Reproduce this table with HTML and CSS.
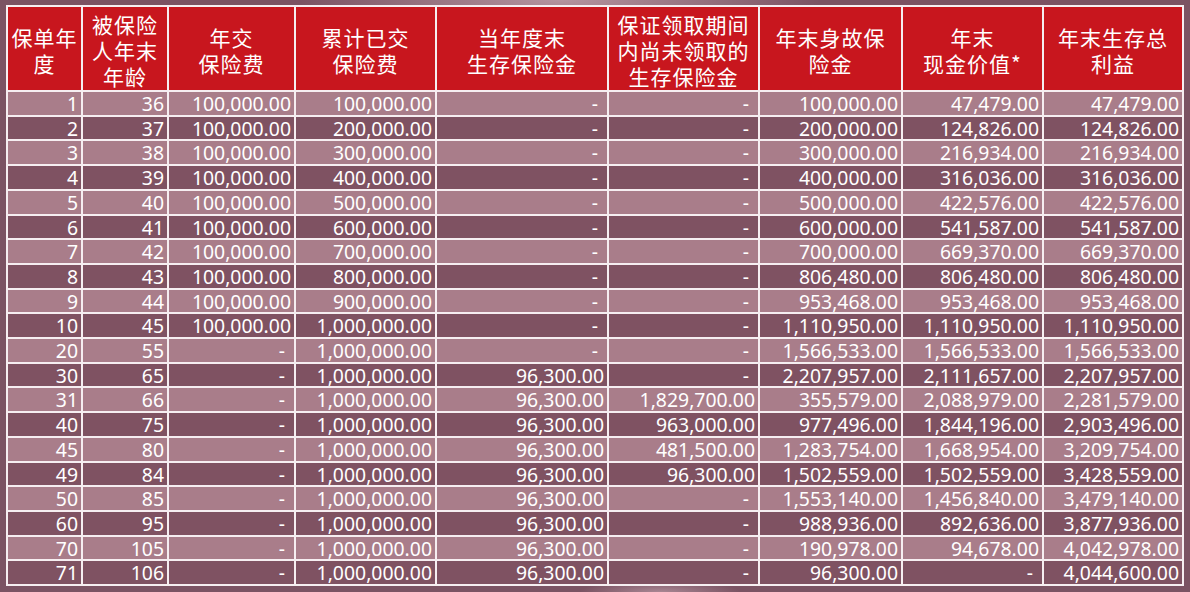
FILE: index.html
```html
<!DOCTYPE html>
<html lang="zh-CN">
<head>
<meta charset="utf-8">
<title>利益演示表</title>
<link rel="stylesheet" href="styles.css">
</head>
<body>
<table class="benefit">
<colgroup>
<col class="w1"><col class="w2"><col class="w3"><col class="w4"><col class="w5"><col class="w6"><col class="w7"><col class="w8"><col class="w9">
</colgroup>
<thead>
<tr class="head">
<th>保单年<br>度</th>
<th>被保险<br>人年末<br>年龄</th>
<th>年交<br>保险费</th>
<th>累计已交<br>保险费</th>
<th>当年度末<br>生存保险金</th>
<th>保证领取期间<br>内尚未领取的<br>生存保险金</th>
<th>年末身故保<br>险金</th>
<th>年末<br>现金价值*</th>
<th>年末生存总<br>利益</th>
</tr>
</thead>
<tbody>
<tr class="lt"><td>1</td><td>36</td><td>100,000.00</td><td>100,000.00</td><td class="nil">-</td><td class="nil">-</td><td>100,000.00</td><td>47,479.00</td><td>47,479.00</td></tr>
<tr class="dk"><td>2</td><td>37</td><td>100,000.00</td><td>200,000.00</td><td class="nil">-</td><td class="nil">-</td><td>200,000.00</td><td>124,826.00</td><td>124,826.00</td></tr>
<tr class="lt"><td>3</td><td>38</td><td>100,000.00</td><td>300,000.00</td><td class="nil">-</td><td class="nil">-</td><td>300,000.00</td><td>216,934.00</td><td>216,934.00</td></tr>
<tr class="dk"><td>4</td><td>39</td><td>100,000.00</td><td>400,000.00</td><td class="nil">-</td><td class="nil">-</td><td>400,000.00</td><td>316,036.00</td><td>316,036.00</td></tr>
<tr class="lt"><td>5</td><td>40</td><td>100,000.00</td><td>500,000.00</td><td class="nil">-</td><td class="nil">-</td><td>500,000.00</td><td>422,576.00</td><td>422,576.00</td></tr>
<tr class="dk"><td>6</td><td>41</td><td>100,000.00</td><td>600,000.00</td><td class="nil">-</td><td class="nil">-</td><td>600,000.00</td><td>541,587.00</td><td>541,587.00</td></tr>
<tr class="lt"><td>7</td><td>42</td><td>100,000.00</td><td>700,000.00</td><td class="nil">-</td><td class="nil">-</td><td>700,000.00</td><td>669,370.00</td><td>669,370.00</td></tr>
<tr class="dk"><td>8</td><td>43</td><td>100,000.00</td><td>800,000.00</td><td class="nil">-</td><td class="nil">-</td><td>806,480.00</td><td>806,480.00</td><td>806,480.00</td></tr>
<tr class="lt"><td>9</td><td>44</td><td>100,000.00</td><td>900,000.00</td><td class="nil">-</td><td class="nil">-</td><td>953,468.00</td><td>953,468.00</td><td>953,468.00</td></tr>
<tr class="dk"><td>10</td><td>45</td><td>100,000.00</td><td>1,000,000.00</td><td class="nil">-</td><td class="nil">-</td><td>1,110,950.00</td><td>1,110,950.00</td><td>1,110,950.00</td></tr>
<tr class="lt"><td>20</td><td>55</td><td class="nil">-</td><td>1,000,000.00</td><td class="nil">-</td><td class="nil">-</td><td>1,566,533.00</td><td>1,566,533.00</td><td>1,566,533.00</td></tr>
<tr class="dk"><td>30</td><td>65</td><td class="nil">-</td><td>1,000,000.00</td><td>96,300.00</td><td class="nil">-</td><td>2,207,957.00</td><td>2,111,657.00</td><td>2,207,957.00</td></tr>
<tr class="lt"><td>31</td><td>66</td><td class="nil">-</td><td>1,000,000.00</td><td>96,300.00</td><td>1,829,700.00</td><td>355,579.00</td><td>2,088,979.00</td><td>2,281,579.00</td></tr>
<tr class="dk"><td>40</td><td>75</td><td class="nil">-</td><td>1,000,000.00</td><td>96,300.00</td><td>963,000.00</td><td>977,496.00</td><td>1,844,196.00</td><td>2,903,496.00</td></tr>
<tr class="lt"><td>45</td><td>80</td><td class="nil">-</td><td>1,000,000.00</td><td>96,300.00</td><td>481,500.00</td><td>1,283,754.00</td><td>1,668,954.00</td><td>3,209,754.00</td></tr>
<tr class="dk"><td>49</td><td>84</td><td class="nil">-</td><td>1,000,000.00</td><td>96,300.00</td><td>96,300.00</td><td>1,502,559.00</td><td>1,502,559.00</td><td>3,428,559.00</td></tr>
<tr class="lt"><td>50</td><td>85</td><td class="nil">-</td><td>1,000,000.00</td><td>96,300.00</td><td class="nil">-</td><td>1,553,140.00</td><td>1,456,840.00</td><td>3,479,140.00</td></tr>
<tr class="dk"><td>60</td><td>95</td><td class="nil">-</td><td>1,000,000.00</td><td>96,300.00</td><td class="nil">-</td><td>988,936.00</td><td>892,636.00</td><td>3,877,936.00</td></tr>
<tr class="lt"><td>70</td><td>105</td><td class="nil">-</td><td>1,000,000.00</td><td>96,300.00</td><td class="nil">-</td><td>190,978.00</td><td>94,678.00</td><td>4,042,978.00</td></tr>
<tr class="dk"><td>71</td><td>106</td><td class="nil">-</td><td>1,000,000.00</td><td>96,300.00</td><td class="nil">-</td><td>96,300.00</td><td class="nil">-</td><td>4,044,600.00</td></tr>
</tbody>
</table>
</body>
</html>
```

FILE: styles.css
```css
html, body {
  margin: 0;
  padding: 0;
}
body {
  width: 1190px;
  height: 592px;
  overflow: hidden;
  background-color: #7b5363;
  background-image:
    radial-gradient(ellipse 260px 40px at 560px 0px, rgba(200, 170, 180, 0.75), rgba(200, 170, 180, 0) 100%),
    radial-gradient(ellipse 80px 12px at 660px 592px, rgba(200, 170, 180, 0.6), rgba(200, 170, 180, 0) 100%);
  font-family: "Noto Sans", "Noto Sans CJK SC", sans-serif;
  color: #ffffff;
}
.benefit {
  margin: 5px 0 0 6px;
  border-collapse: collapse;
  table-layout: fixed;
  width: 1178px;
  border: 2px solid #f6eef1;
}
.w1 { width: 75px; }
.w2 { width: 86px; }
.w3 { width: 127px; }
.w4 { width: 141px; }
.w5 { width: 172px; }
.w6 { width: 151px; }
.w7 { width: 143px; }
.w8 { width: 141px; }
.w9 { width: 140px; }

.benefit th,
.benefit td {
  border: 2px solid #f6eef1;
  padding: 0;
  white-space: nowrap;
}
.benefit th {
  background: #c8161e;
  font-family: "Noto Sans CJK SC", sans-serif;
  font-weight: normal;
  font-size: 21px;
  letter-spacing: 1px;
  line-height: 26px;
  text-align: center;
  vertical-align: middle;
  padding: 4px 0 1px;
  height: 78px;
}
.benefit td {
  font-size: 19.4px;
  line-height: 20.7px;
  text-align: right;
  vertical-align: middle;
  padding: 2px 3px 0 0;
}
.benefit td.nil {
  padding-right: 9px;
}
.lt td {
  background: #a97d8a;
}
.dk td {
  background: #7f5262;
}
```
